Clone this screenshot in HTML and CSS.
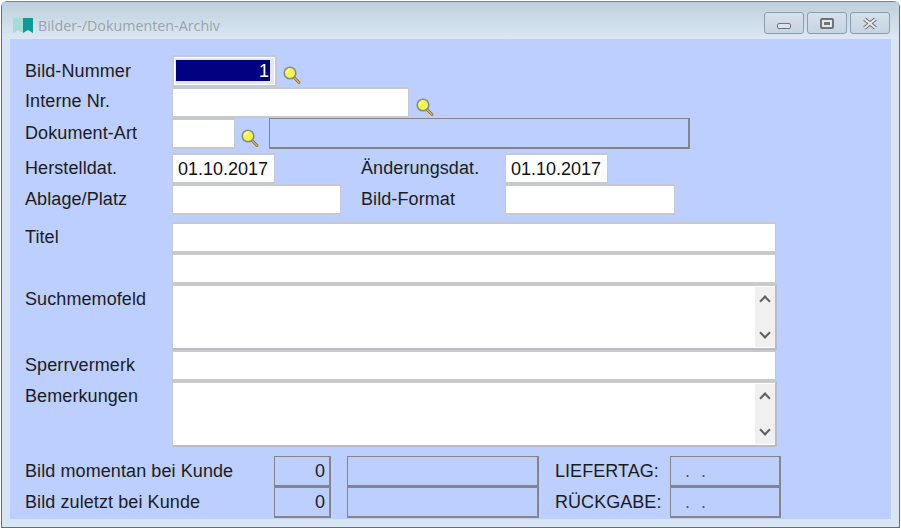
FILE: index.html
```html
<!DOCTYPE html>
<html lang="de">
<head>
<meta charset="utf-8">
<title>Bilder-/Dokumenten-Archiv</title>
<link rel="stylesheet" href="styles.css">
</head>
<body>
<svg class="defs" width="0" height="0" aria-hidden="true">
  <defs>
    <symbol id="lens" viewBox="0 0 18 18">
      <path d="M10.500 11l5.500 5.500" stroke="#9a6a20" stroke-width="2.800" stroke-linecap="round"/>
      <path d="M10.500 11l5.500 5.500" stroke="#e8b850" stroke-width="1.100" stroke-linecap="round"/>
      <circle cx="7" cy="7" r="5.800" fill="#f4f44c" stroke="#7f8f8f" stroke-width="1.600"/>
      <path d="M3.800 6.500a3.400 3.400 0 0 1 3-3" fill="none" stroke="#fdfdc8" stroke-width="1.200"/>
    </symbol>
  </defs>
</svg>
<div class="window">
  <header class="titlebar">
    <svg class="appicon" width="21" height="15" viewBox="0 0 21 15">
      <path d="M0 0h10v15l-5-3-5 3z" fill="#a6dcd6"/>
      <path d="M10 0h10v15l-5-3-5 3z" fill="#119a94"/>
    </svg>
    <span class="title">Bilder-/Dokumenten-Archiv</span>
    <div class="controls">
      <button class="ctl"><span class="ico-min"></span></button>
      <button class="ctl"><span class="ico-max"></span></button>
      <button class="ctl">
        <svg width="16" height="13" viewBox="0 0 16 13"><path d="M2.500 2l11 9M13.500 2l-11 9" stroke="#6f7478" stroke-width="4"/><path d="M2.500 2l11 9M13.500 2l-11 9" stroke="#eceef0" stroke-width="1.800"/></svg>
      </button>
    </div>
  </header>
  <main class="form">
    <div class="row first">
      <label class="lab">Bild-Nummer</label>
      <div class="field focus w105"><span class="sel">1</span></div>
      <svg class="lens"><use href="#lens"/></svg>
    </div>
    <div class="row">
      <label class="lab high">Interne Nr.</label>
      <div class="field w237"></div>
      <svg class="lens right"><use href="#lens"/></svg>
    </div>
    <div class="row">
      <label class="lab low">Dokument-Art</label>
      <div class="field w63"></div>
      <svg class="lens"><use href="#lens"/></svg>
      <div class="ro w421 push"></div>
    </div>
    <div class="row gap4">
      <label class="lab low">Herstelldat.</label>
      <div class="cell"><div class="field w103 val">01.10.2017</div></div>
      <label class="lab2 low">Änderungsdat.</label>
      <div class="field w103 val">01.10.2017</div>
    </div>
    <div class="row">
      <label class="lab low">Ablage/Platz</label>
      <div class="cell"><div class="field w169"></div></div>
      <label class="lab2 low">Bild-Format</label>
      <div class="field w170"></div>
    </div>
    <div class="row gap7">
      <label class="lab low">Titel</label>
      <div class="field w604"></div>
    </div>
    <div class="row">
      <span class="lab"></span>
      <div class="field w604"></div>
    </div>
    <div class="row tall">
      <label class="lab low">Suchmemofeld</label>
      <div class="field w605 memo">
        <div class="scroll"><i class="up"></i><i class="down"></i></div>
      </div>
    </div>
    <div class="row">
      <label class="lab low">Sperrvermerk</label>
      <div class="field w604"></div>
    </div>
    <div class="row tall">
      <label class="lab low">Bemerkungen</label>
      <div class="field w605 memo">
        <div class="scroll"><i class="up"></i><i class="down"></i></div>
      </div>
    </div>
    <div class="row gap9">
      <label class="lab wide low">Bild momentan bei Kunde</label>
      <div class="ro w57 num">0</div>
      <div class="ro w192 ml16"></div>
      <label class="lab3 low">LIEFERTAG:</label>
      <div class="ro w111 date">. .</div>
    </div>
    <div class="row">
      <label class="lab wide low">Bild zuletzt bei Kunde</label>
      <div class="ro w57 num">0</div>
      <div class="ro w192 ml16"></div>
      <label class="lab3 low">RÜCKGABE:</label>
      <div class="ro w111 date">. .</div>
    </div>
  </main>
</div>
</body>
</html>
```
FILE: styles.css
```css
* { box-sizing: border-box; }
html, body { margin: 0; height: 100%; background: #fff; overflow: hidden; }
body { padding: 1px 0 0 1px; }
.defs { position: absolute; }
.window {
  width: 899px; height: 527px;
  border: 1px solid #6a6e72;
  border-top-color: #7d8185;
  border-radius: 6px 6px 0 0;
  background: #d9e5f2;
  font: 18px "Liberation Sans", Arial, sans-serif;
  color: #1c1c1c;
  display: flex; flex-direction: column;
}
.titlebar {
  height: 37px; flex: none;
  display: flex; align-items: center;
  padding: 14px 9px 2px 11px;
  background: linear-gradient(#bdcfdd, #dce8f3);
}
.appicon { margin-right: 4px; flex: none; margin-top: -3px; }
.title { font: 14.300px "Open Sans", sans-serif; color: #9ba3aa; margin-top: -2px; }
.controls { margin-left: auto; display: flex; gap: 3px; margin-top: -7px; }
.ctl {
  width: 40px; height: 22px; padding: 0;
  border: 1px solid #8d9dae; border-radius: 3px;
  background: linear-gradient(#d7e0ea, #c6d4e3);
  display: flex; align-items: center; justify-content: center;
}
.ico-min { width: 14px; height: 6px; margin-top: 5px; background: #dfe3e7; border: 1px solid #6f7478; border-radius: 2px; }
.ico-max { width: 14px; height: 11px; border: 2px solid #6f7478; border-radius: 2px; background: #6f7478; box-shadow: inset 0 0 0 2px #e4e7ea; }
.form {
  margin: 0 8px 8px 8px; flex: 1;
  background: #bdcffe;
  padding-top: 16px;
  display: flex; flex-direction: column;
}
.row { display: flex; align-items: flex-start; height: 31px; flex: none; }
.first { height: 32px; }
.tall { height: 66px; }
.gap4 { margin-top: 4px; }
.gap7 { margin-top: 7px; }
.gap9 { margin-top: 9px; }
.lab { width: 147px; margin-left: 15px; flex: none; line-height: 20px; padding-top: 6px; white-space: nowrap; letter-spacing: .09px; }
.low { padding-top: 5px; }
.high { padding-top: 4px; }
.wide { width: 249px; }
.cell { width: 189px; height: 100%; flex: none; }
.lab2 { width: 144px; line-height: 20px; white-space: nowrap; flex: none; letter-spacing: .09px; }
.lab3 { width: 115px; margin-left: 16px; line-height: 20px; white-space: nowrap; flex: none; letter-spacing: .05px; }
.field {
  background: #fff; height: 100%; flex: none;
  border: solid #c6c9ce; border-width: 2px 1px 2px 1px;
}
.focus { padding: 3px 5px 3px 2px; background: #e3e7fb; border-width: 2px; box-shadow: inset 0 0 0 1px #fff; }
.sel { display: block; height: 21px; background: #000080; color: #fff; text-align: right; line-height: 22px; padding-right: 1px; }
.val { padding-left: 5px; line-height: 28px; color: #111; }
.w105 { width: 105px; } .w237 { width: 237px; } .w63 { width: 63px; } .w103 { width: 103px; }
.w169 { width: 169px; } .w170 { width: 170px; } .w604 { width: 604px; } .w605 { width: 605px; }
.w421 { width: 421px; } .w57 { width: 57px; } .w192 { width: 192px; } .w111 { width: 111px; }
.ml16 { margin-left: 16px; }
.push { margin-left: 10px; }
.lens { width: 18px; height: 18px; flex: none; margin: 11px 0 0 6px; }
.lens.right { margin-left: 7px; }
.ro { height: 100%; flex: none; border: solid #858585; border-width: 1px 2px 2px 1px; }
.num { text-align: right; padding-right: 4px; line-height: 28px; }
.date { padding-left: 14px; line-height: 28px; word-spacing: 6px; color: #555; }
.memo { position: relative; border-right: 2px solid #b9bcc4; border-bottom-color: #b9bcc4; }
.scroll {
  position: absolute; right: 0; top: 1px; bottom: 1px; width: 20px;
  background: #f0f0f0;
}
.scroll i { position: absolute; left: 6px; width: 8px; height: 8px; border: solid #606060; border-width: 2.500px 0 0 2.500px; }
.up { top: 10px; transform: rotate(45deg); }
.down { bottom: 10px; transform: rotate(225deg); }
```
